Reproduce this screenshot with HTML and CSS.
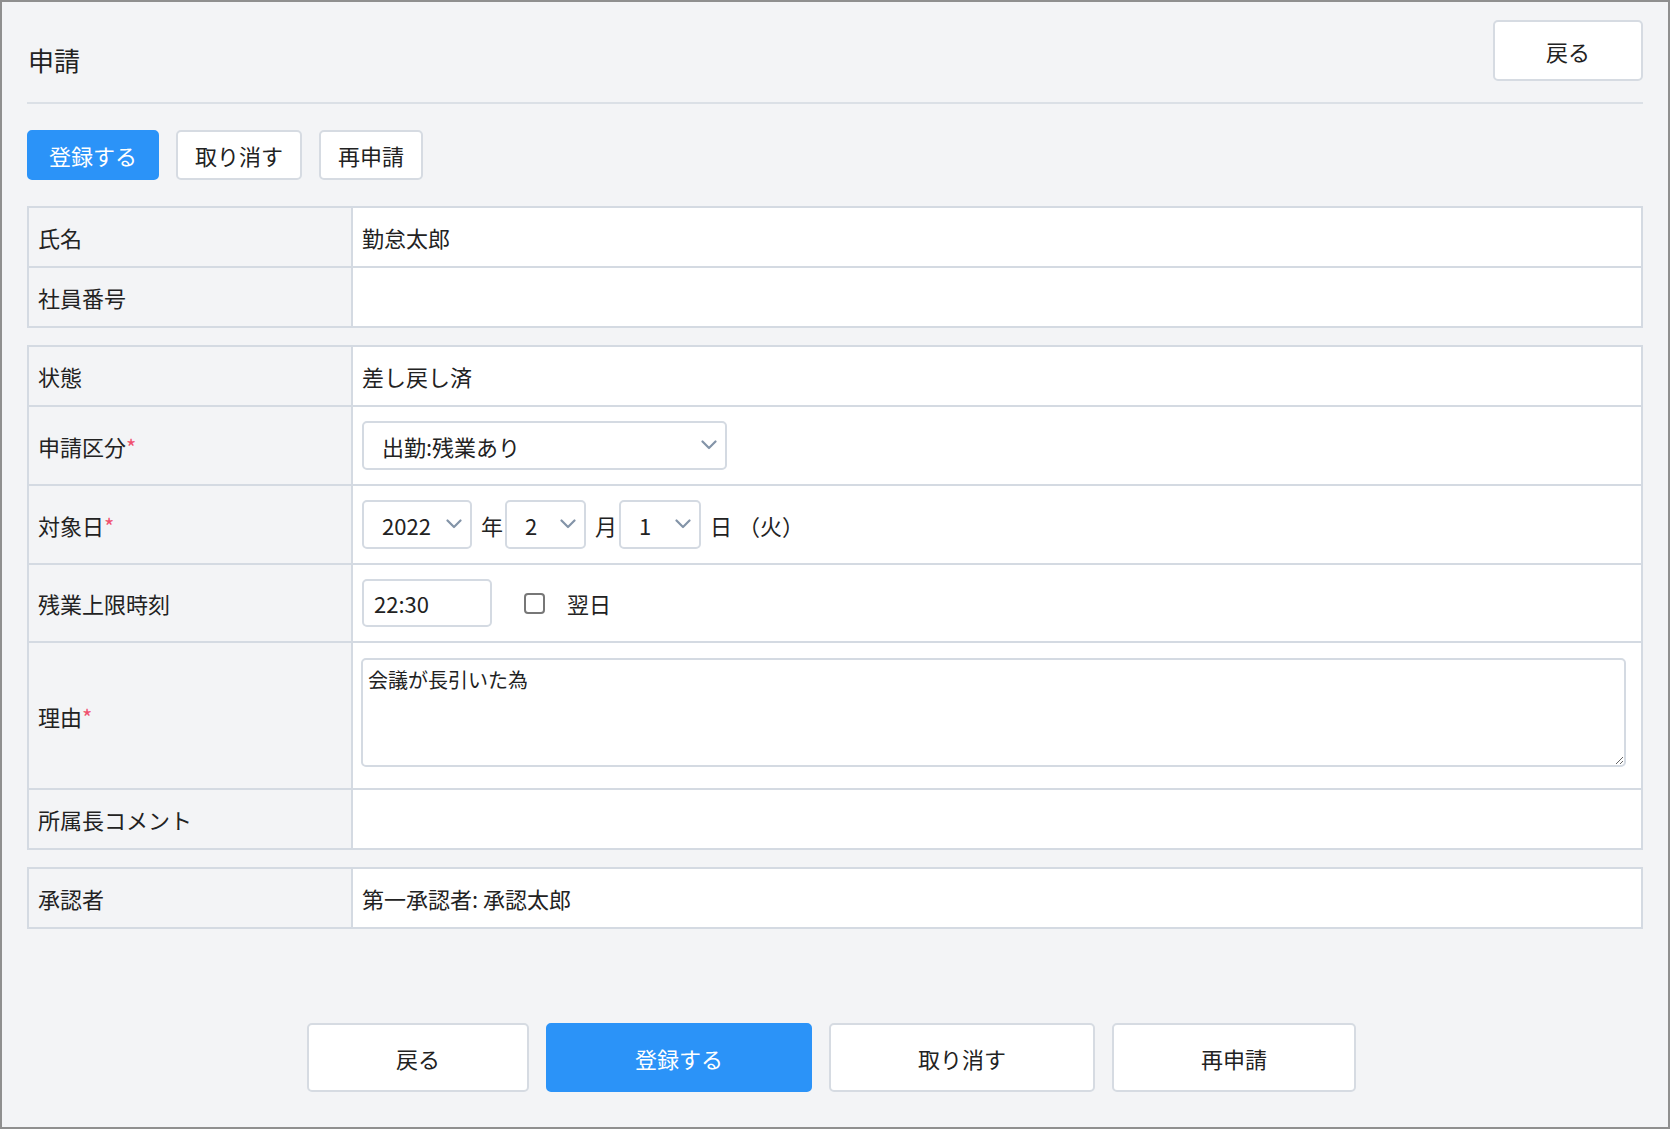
FILE: index.html
```html
<!DOCTYPE html>
<html lang="ja">
<head>
  <meta charset="UTF-8">
  <title>申請</title>
  <link rel="stylesheet" href="styles.css">
</head>
<body>
  <div class="page">
    <div class="header">
      <h1 class="title">申請</h1>
      <button class="btn btn-back">戻る</button>
    </div>

    <div class="actions">
      <button class="btn btn-primary">登録する</button>
      <button class="btn">取り消す</button>
      <button class="btn">再申請</button>
    </div>

    <table class="info">
      <tr><th>氏名</th><td>勤怠太郎</td></tr>
      <tr><th>社員番号</th><td></td></tr>
    </table>

    <table class="info">
      <tr><th>状態</th><td>差し戻し済</td></tr>
      <tr class="ctrl">
        <th>申請区分<span class="req">*</span></th>
        <td>
          <div class="select-wrap sel-kubun">
            <select><option>出勤:残業あり</option></select>
            <svg class="chev" viewBox="0 0 16 10"><path d="M1.5 1.5L8 8l6.5-6.5"/></svg>
          </div>
        </td>
      </tr>
      <tr class="ctrl">
        <th>対象日<span class="req">*</span></th>
        <td>
          <div class="line">
            <div class="select-wrap sel-year">
              <select><option>2022</option></select>
              <svg class="chev" viewBox="0 0 16 10"><path d="M1.5 1.5L8 8l6.5-6.5"/></svg>
            </div>
            <span class="unit">年</span>
            <div class="select-wrap sel-month">
              <select><option>2</option></select>
              <svg class="chev" viewBox="0 0 16 10"><path d="M1.5 1.5L8 8l6.5-6.5"/></svg>
            </div>
            <span class="unit">月</span>
            <div class="select-wrap sel-day">
              <select><option>1</option></select>
              <svg class="chev" viewBox="0 0 16 10"><path d="M1.5 1.5L8 8l6.5-6.5"/></svg>
            </div>
            <span class="unit">日</span>
            <span class="weekday">（火）</span>
          </div>
        </td>
      </tr>
      <tr class="ctrl">
        <th>残業上限時刻</th>
        <td>
          <div class="line">
            <input type="text" class="time" value="22:30">
            <input type="checkbox" class="check" id="next">
            <label for="next" class="check-label">翌日</label>
          </div>
        </td>
      </tr>
      <tr class="ctrl">
        <th>理由<span class="req">*</span></th>
        <td class="reason"><textarea>会議が長引いた為</textarea></td>
      </tr>
      <tr><th>所属長コメント</th><td></td></tr>
    </table>

    <table class="info">
      <tr><th>承認者</th><td>第一承認者: 承認太郎</td></tr>
    </table>

    <div class="footer">
      <button class="btn btn-lg">戻る</button>
      <button class="btn btn-lg btn-primary">登録する</button>
      <button class="btn btn-lg">取り消す</button>
      <button class="btn btn-lg">再申請</button>
    </div>
  </div>
</body>
</html>
```

FILE: styles.css
```css
html, body{
  margin: 0;
  padding: 0;
}
body{
  font-family: "Noto Sans CJK JP", "Noto Sans", sans-serif;
  color: #222;
  font-size: 22px;
}
.page{
  box-sizing: border-box;
  min-height: 100vh;
  border: 2px solid #8f8f8f;
  background: #f3f4f6;
  padding: 0 25px;
}

/* ヘッダー */
.header{
  display: flex;
  justify-content: space-between;
  align-items: center;
  padding: 18px 0 21px;
  border-bottom: 2px solid #dbe0e6;
}
.title{
  margin: 18px 0 0 1px;
  font-size: 26px;
  font-weight: normal;
  line-height: 36px;
}

/* ボタン */
.btn{
  box-sizing: border-box;
  height: 50px;
  padding: 0 17px;
  border: 2px solid #d6dbe2;
  border-radius: 5px;
  background: #fff;
  color: #222;
  font-family: "Noto Sans CJK JP", "Noto Sans", sans-serif;
  font-size: 22px;
  line-height: 1;
  cursor: pointer;
}
.btn-primary{
  background: #2b93f8;
  border-color: #2b93f8;
  color: #fff;
  padding: 0 20px;
}
.btn-back{
  width: 150px;
  height: 61px;
  padding: 0;
}
.actions{
  display: flex;
  gap: 17px;
  margin-top: 26px;
}

/* テーブル */
.info{
  width: 100%;
  border-collapse: collapse;
  table-layout: fixed;
  margin-top: 17px;
}
.actions + .info{
  margin-top: 26px;
}
.info th, .info td{
  border: 2px solid #d4dae2;
  padding: 13px 9px;
  line-height: 32px;
  text-align: left;
  vertical-align: middle;
  font-weight: normal;
}
.info th{
  width: 304px;
  background: #f3f4f6;
}
.info td{
  background: #fff;
}
.info .ctrl td{
  padding: 14px 9px;
}
.req{
  color: #f0506e;
  font-size: 22px;
}

/* セレクト */
.line{
  display: flex;
  align-items: center;
}
.select-wrap{
  position: relative;
  display: inline-block;
}
.select-wrap select{
  -webkit-appearance: none;
  appearance: none;
  box-sizing: border-box;
  width: 100%;
  height: 49px;
  padding: 0 30px 0 18px;
  border: 2px solid #d4dae2;
  border-radius: 5px;
  background: #fff;
  color: #222;
  font-family: "Noto Sans CJK JP", "Noto Sans", sans-serif;
  font-size: 22px;
  display: block;
}
.chev{
  position: absolute;
  right: 10px;
  top: 19px;
  width: 16px;
  height: 10px;
  pointer-events: none;
}
.chev path{
  fill: none;
  stroke: #8394a8;
  stroke-width: 2.2;
  stroke-linecap: round;
  stroke-linejoin: round;
}
.sel-kubun{ width: 365px; }
.sel-year{ width: 110px; }
.sel-month{ width: 81px; }
.sel-day{ width: 82px; }
.unit{
  margin: 0 2px 0 9px;
}
.weekday{
  margin-left: 4px;
}

/* 時刻 */
.time{
  box-sizing: border-box;
  width: 130px;
  height: 48px;
  padding: 0 10px;
  border: 2px solid #d4dae2;
  border-radius: 5px;
  font-family: "Noto Sans CJK JP", "Noto Sans", sans-serif;
  font-size: 22px;
  color: #222;
}
.check{
  -webkit-appearance: none;
  appearance: none;
  box-sizing: border-box;
  width: 21px;
  height: 21px;
  margin: 0 0 0 32px;
  border: 2px solid #777;
  border-radius: 4px;
  background: #fff;
}
.check-label{
  margin-left: 22px;
}

/* 理由 */
.info td.reason{
  padding: 15px 15px 14px 8px;
}
.reason textarea{
  display: block;
  box-sizing: border-box;
  width: 100%;
  height: 109px;
  margin-bottom: 7px;
  padding: 5px 5px;
  border: 2px solid #d4dae2;
  border-radius: 5px;
  font-family: "Noto Sans CJK JP", "Noto Sans", sans-serif;
  font-size: 20px;
  color: #222;
}

/* フッター */
.footer{
  display: flex;
  justify-content: center;
  gap: 17px;
  margin-top: 94px;
  padding-right: 7px;
}
.btn-lg{
  height: 69px;
  padding: 0 87px;
}
.btn-lg.btn-primary{
  padding: 0 87px;
}
```
